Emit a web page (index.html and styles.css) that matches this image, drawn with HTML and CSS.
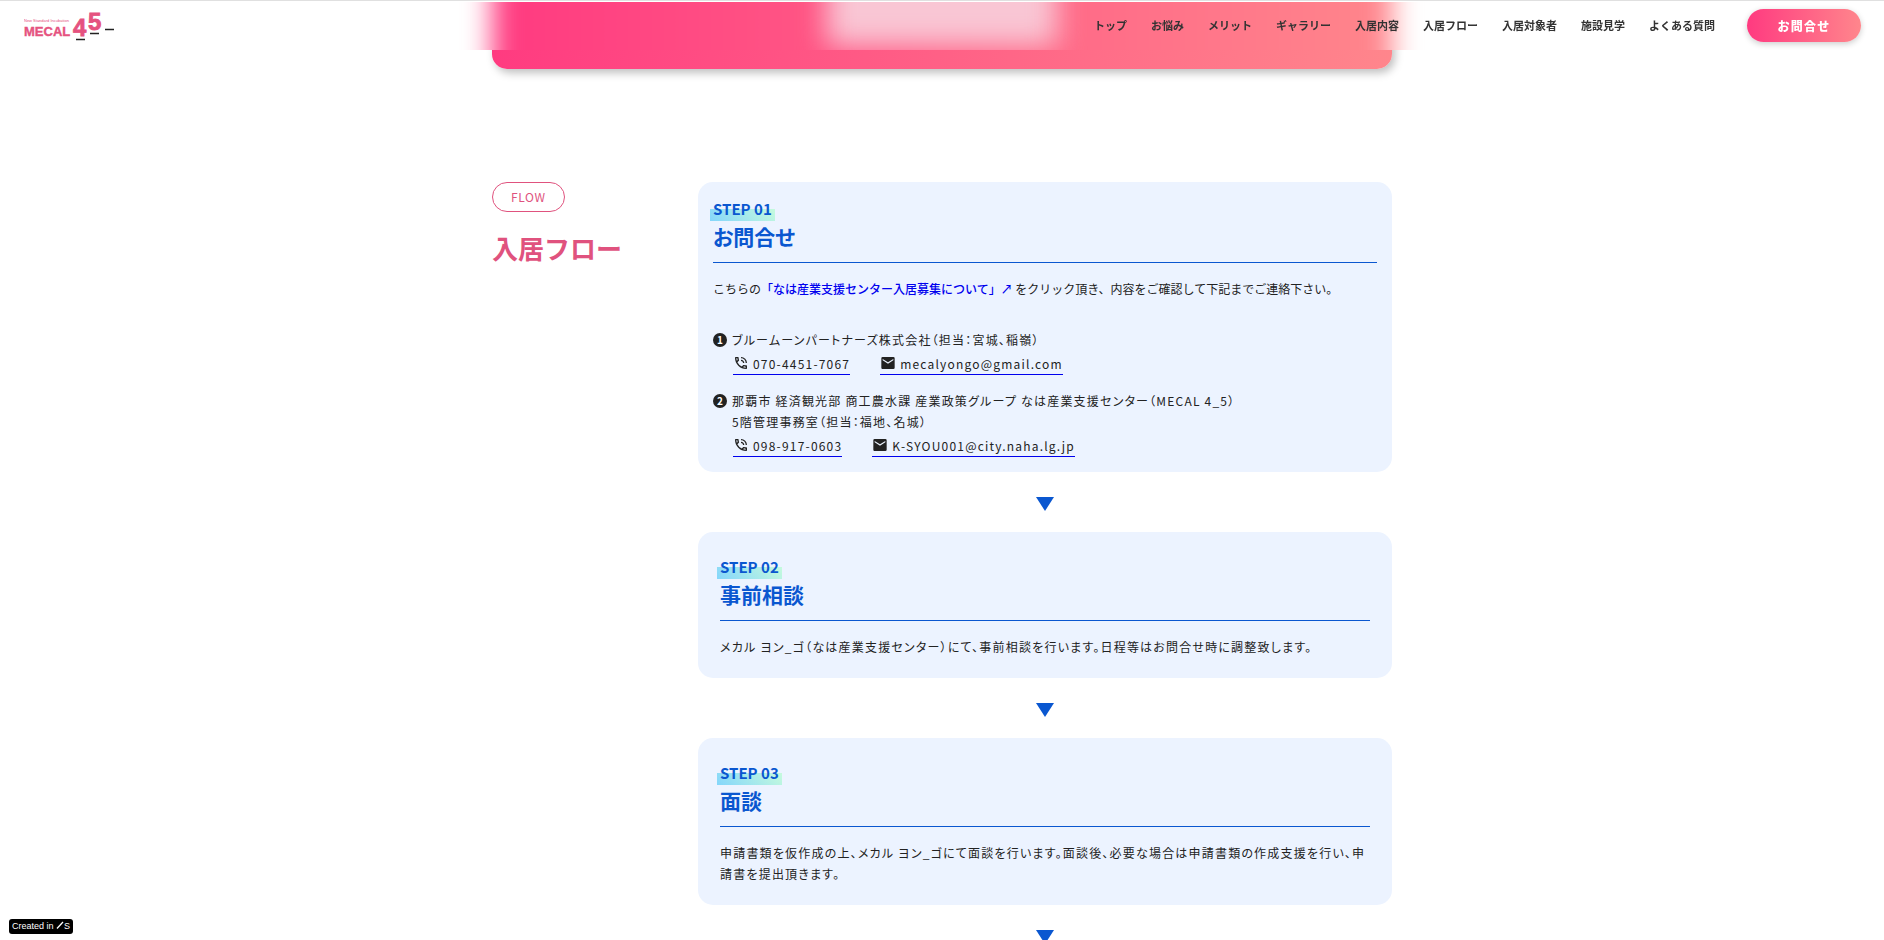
FILE: index.html
```html
<!DOCTYPE html>
<html lang="ja">
<head>
    <meta charset="UTF-8">
    <title>入居フロー | MECAL 4_5</title>
    <link rel="stylesheet" href="styles.css">
</head>
<body>

<svg class="sprite" aria-hidden="true">
    <symbol id="icon-phone" viewBox="0 0 24 24">
        <path d="M20 15.500c-1.250 0-2.450-.2-3.570-.57a1.020 1.020 0 0 0-1.020.24l-2.200 2.200a15.050 15.050 0 0 1-6.590-6.590l2.200-2.210a.96.96 0 0 0 .25-1A11.360 11.360 0 0 1 8.500 4c0-.55-.45-1-1-1H4c-.55 0-1 .45-1 1 0 9.390 7.610 17 17 17 .55 0 1-.45 1-1v-3.500c0-.55-.45-1-1-1zM5 5h1.500c.1.900.2 1.760.45 2.600l-1.200 1.200C5.400 7.600 5.100 6.300 5 5zm14 14c-1.300-.1-2.600-.4-3.800-.8l1.200-1.200c.8.200 1.700.4 2.600.5zM19 12h2a9 9 0 0 0-9-9v2c3.870 0 7 3.130 7 7zm-4 0h2c0-2.760-2.240-5-5-5v2c1.660 0 3 1.340 3 3z"/>
    </symbol>
    <symbol id="icon-mail" viewBox="0 0 24 24">
        <path d="M20 3H4a2 2 0 0 0-2 2v14c0 1.100.9 2 2 2h16a2 2 0 0 0 2-2V5a2 2 0 0 0-2-2zm0 5-8 5-8-5V6l8 5 8-5v2z"/>
    </symbol>
</svg>

<header class="header">
    <div class="header-glow"></div>
    <a class="logo" href="#" aria-label="MECAL 4_5">
        <svg width="92" height="44" viewBox="0 -5 92 44">
            <text class="logo-tag" x="0" y="13">New Standard Incubation</text>
            <text class="logo-name" x="0" y="27">MECAL</text>
            <text class="logo-num" x="49" y="27">4</text>
            <text class="logo-num" x="64" y="21">5</text>
            <path d="M52 30.500h9M66 24.500h9M81 20.500h9"/>
        </svg>
    </a>
    <nav class="nav">
        <a href="#">トップ</a>
        <a href="#">お悩み</a>
        <a href="#">メリット</a>
        <a href="#">ギャラリー</a>
        <a href="#">入居内容</a>
        <a href="#flow">入居フロー</a>
        <a href="#">入居対象者</a>
        <a href="#">施設見学</a>
        <a href="#">よくある質問</a>
    </nav>
    <a class="contact-button" href="#">お問合せ</a>
</header>

<main class="container">
    <div class="banner"></div>

    <section class="flow" id="flow">
        <div class="side">
            <span class="pill">FLOW</span>
            <h2>入居フロー</h2>
        </div>

        <div class="steps">
            <article class="step step-contact">
                <p class="step-no">STEP 01</p>
                <h3>お問合せ</h3>
                <p class="lead">こちらの<a href="#">「なは産業支援センター入居募集について」↗</a> をクリック頂き、内容をご確認して下記までご連絡下さい。</p>
                <ol class="contacts">
                    <li>
                        <span class="num">1</span>
                        <div>
                            <p>ブルームーンパートナーズ株式会社（担当：宮城、稲嶺）</p>
                            <div class="links">
                                <a href="tel:070-4451-7067"><svg><use href="#icon-phone"/></svg>070-4451-7067</a>
                                <a href="mailto:mecalyongo@gmail.com"><svg><use href="#icon-mail"/></svg>mecalyongo@gmail.com</a>
                            </div>
                        </div>
                    </li>
                    <li>
                        <span class="num">2</span>
                        <div>
                            <p>那覇市 経済観光部 商工農水課 産業政策グループ なは産業支援センター（MECAL 4_5）<br>5階管理事務室（担当：福地、名城）</p>
                            <div class="links">
                                <a href="tel:098-917-0603"><svg><use href="#icon-phone"/></svg>098-917-0603</a>
                                <a href="mailto:K-SYOU001@city.naha.lg.jp"><svg><use href="#icon-mail"/></svg>K-SYOU001@city.naha.lg.jp</a>
                            </div>
                        </div>
                    </li>
                </ol>
            </article>

            <div class="arrow"></div>

            <article class="step">
                <p class="step-no">STEP 02</p>
                <h3>事前相談</h3>
                <p>メカル ヨン_ゴ（なは産業支援センター）にて、事前相談を行います。日程等はお問合せ時に調整致します。</p>
            </article>

            <div class="arrow"></div>

            <article class="step">
                <p class="step-no">STEP 03</p>
                <h3>面談</h3>
                <p>申請書類を仮作成の上、メカル ヨン_ゴにて面談を行います。面談後、必要な場合は申請書類の作成支援を行い、申請書を提出頂きます。</p>
            </article>

            <div class="arrow"></div>
        </div>
    </section>
</main>

<a class="badge" href="#">Created in <svg width="8" height="8" viewBox="0 0 8 8"><path d="M1 7.500 7 1"/></svg>S</a>

</body>
</html>
```
FILE: styles.css
```css
* {
    box-sizing: border-box;
}
body {
    margin: 0;
    height: 100vh;
    overflow: hidden;
    border-top: 1px solid #e0e0e0;
    font-family: "Noto Sans CJK JP", sans-serif;
    font-size: 12px;
    line-height: 21px;
    color: #222;
    background: #fff;
}
h2, h3, p, ol {
    margin: 0;
    padding: 0;
}
a {
    text-decoration: none;
}
.sprite {
    display: none;
}

/* header */
.header {
    position: fixed;
    top: 1px;
    left: 0;
    right: 0;
    z-index: 10;
    display: flex;
    align-items: center;
    height: 49px;
    padding: 0 23px;
    background: #fff;
}
.header-glow {
    position: absolute;
    inset: 1px 0 0;
    z-index: -1;
    overflow: hidden;
}
.header-glow::before, .header-glow::after {
    content: "";
    position: absolute;
    top: -60px;
    left: 50%;
    transform: translateX(-50%);
    filter: blur(14px);
}
.header-glow::before {
    bottom: -60px;
    width: 900px;
    background: linear-gradient(90deg, #ff3a80, #ff868c);
}
.header-glow::after {
    bottom: 4px;
    width: 230px;
    background: #f9c6d4;
}
.logo {
    display: flex;
    margin-right: auto;
    padding-left: 1px;
}
.logo text {
    font-family: "Liberation Sans", sans-serif;
    fill: #e5527f;
}
.logo path {
    stroke: #222;
    stroke-width: 1.5;
}
.logo .logo-tag {
    font-size: 4px;
}
.logo .logo-name {
    font-size: 13px;
    font-weight: bold;
    stroke: #e5527f;
    stroke-width: 0.4;
}
.logo .logo-num {
    font-size: 24px;
    font-weight: bold;
    stroke: #e5527f;
    stroke-width: 0.8;
}
.nav {
    display: flex;
    gap: 24px;
    margin-right: 32px;
}
.nav a {
    font-size: 11px;
    font-weight: bold;
    color: #333;
}
.contact-button {
    width: 114px;
    border-radius: 17px;
    font-weight: 900;
    line-height: 33px;
    letter-spacing: 0.1em;
    text-align: center;
    color: #fff;
    background: linear-gradient(90deg, #ff3a80, #ff868c);
    box-shadow: 0 2px 6px rgba(0, 0, 0, 0.2);
}

/* banner */
.container {
    width: 900px;
    margin: 0 auto;
}
.banner {
    height: 68px;
    border-radius: 0 0 15px 15px;
    background: linear-gradient(100deg, #ff3a80, #ff868c);
    box-shadow: 3px 4px 8px rgba(0, 0, 0, 0.25);
}

/* flow */
.flow {
    display: flex;
    padding-top: 113px;
}
.side {
    flex: 0 0 206px;
    color: #e0527e;
}
.pill {
    display: inline-block;
    padding: 0 18px;
    border: 1px solid #e0527e;
    border-radius: 15px;
    line-height: 28px;
    letter-spacing: 0.05em;
}
.side h2 {
    margin-top: 17px;
    font-size: 26px;
    line-height: 38px;
}
.steps {
    flex: 1;
}
.step {
    padding: 23px 22px 21px;
    border-radius: 15px;
    background: #ecf3ff;
}
.step > p, .contacts {
    letter-spacing: 0.1em;
    font-feature-settings: "palt";
}
.step > .step-no {
    display: table;
    margin: 0 -3px;
    padding: 0 3px;
    font-size: 15px;
    font-weight: bold;
    line-height: 24px;
    letter-spacing: 0;
    color: #0a57d0;
    background: linear-gradient(45deg, #84d6fb, #c5fadd) 0 100% / 100% 12px no-repeat;
}
.step h3 {
    margin-bottom: 15px;
    padding-bottom: 10px;
    border-bottom: 1px solid #0a57d0;
    font-size: 21px;
    line-height: 31px;
    font-feature-settings: "palt";
    color: #0a57d0;
}
.step-contact {
    padding: 15px;
}
.step > .lead {
    letter-spacing: 0;
    font-feature-settings: normal;
}
.lead a {
    font-weight: 500;
    color: #00e;
}

/* contact list */
.contacts {
    display: grid;
    gap: 15px;
    margin-top: 30px;
    list-style: none;
}
.contacts li {
    display: flex;
    gap: 5px;
}
.num {
    width: 14px;
    height: 14px;
    margin-top: 4px;
    border-radius: 50%;
    font-size: 10px;
    font-weight: bold;
    line-height: 14px;
    letter-spacing: 0;
    text-align: center;
    color: #fff;
    background: #222;
}
.links {
    display: flex;
    gap: 30px;
    margin-top: 4px;
    padding-left: 1px;
}
.links a {
    border-bottom: 1px solid #00e;
    line-height: 20px;
    color: #222;
}
.links svg {
    width: 16px;
    height: 16px;
    margin-right: 4px;
    vertical-align: -2px;
    fill: #222;
}
.arrow {
    width: 18px;
    height: 14px;
    margin: 25px auto 21px;
    background: #0a57d0;
    clip-path: polygon(0 0, 100% 0, 50% 100%);
}

.badge {
    position: fixed;
    left: 9px;
    bottom: 6px;
    padding: 0 3px;
    border-radius: 3px;
    font-family: "Liberation Sans", sans-serif;
    font-size: 9px;
    line-height: 15px;
    color: #fff;
    background: #000;
}
.badge path {
    stroke: #fff;
    stroke-width: 1.3;
}
```
